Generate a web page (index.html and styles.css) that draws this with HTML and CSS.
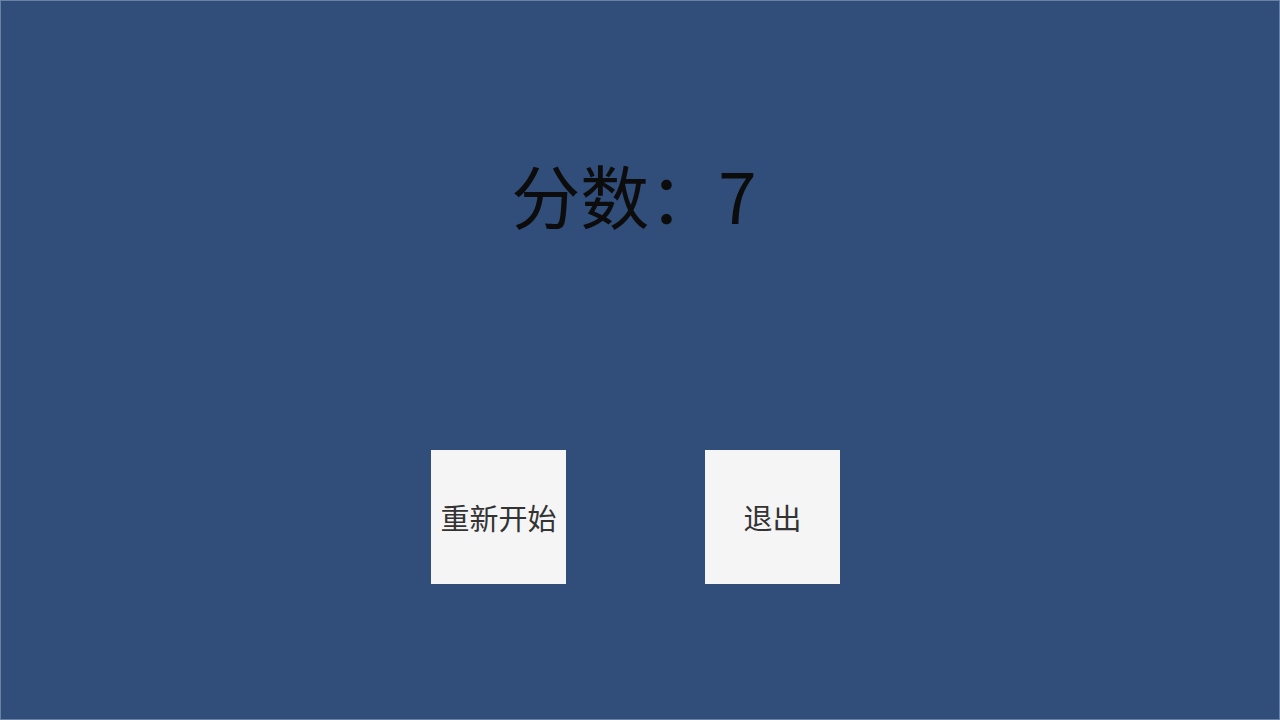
FILE: index.html
```html
<!DOCTYPE html>
<html lang="zh">
<head>
<meta charset="utf-8">
<link rel="stylesheet" href="styles.css">
</head>
<body>
<div class="screen">
  <div class="score">分数：7</div>
  <div class="buttons">
    <div class="btn">重新开始</div>
    <div class="btn">退出</div>
  </div>
</div>
</body>
</html>
```
FILE: styles.css
```css
html, body {
  margin: 0;
  padding: 0;
  width: 1280px;
  height: 720px;
  overflow: hidden;
  background: #314d79;
}
.screen {
  box-sizing: border-box;
  width: 1280px;
  height: 720px;
  border: 1px solid #6a80a5;
  background: #314d79;
  display: flex;
  flex-direction: column;
  align-items: center;
  font-family: "Noto Sans CJK SC", "Noto Sans", sans-serif;
}
.score {
  margin-top: 144px;
  height: 98px;
  font-size: 69px;
  line-height: 98px;
  color: #0c0c0c;
  padding-right: 12px;
}
.buttons {
  margin-top: 207px;
  display: flex;
  gap: 139px;
  padding-right: 9px;
}
.btn {
  width: 135px;
  height: 134px;
  background: #f5f5f5;
  color: #333;
  font-size: 29px;
  display: flex;
  align-items: center;
  justify-content: center;
}
```
